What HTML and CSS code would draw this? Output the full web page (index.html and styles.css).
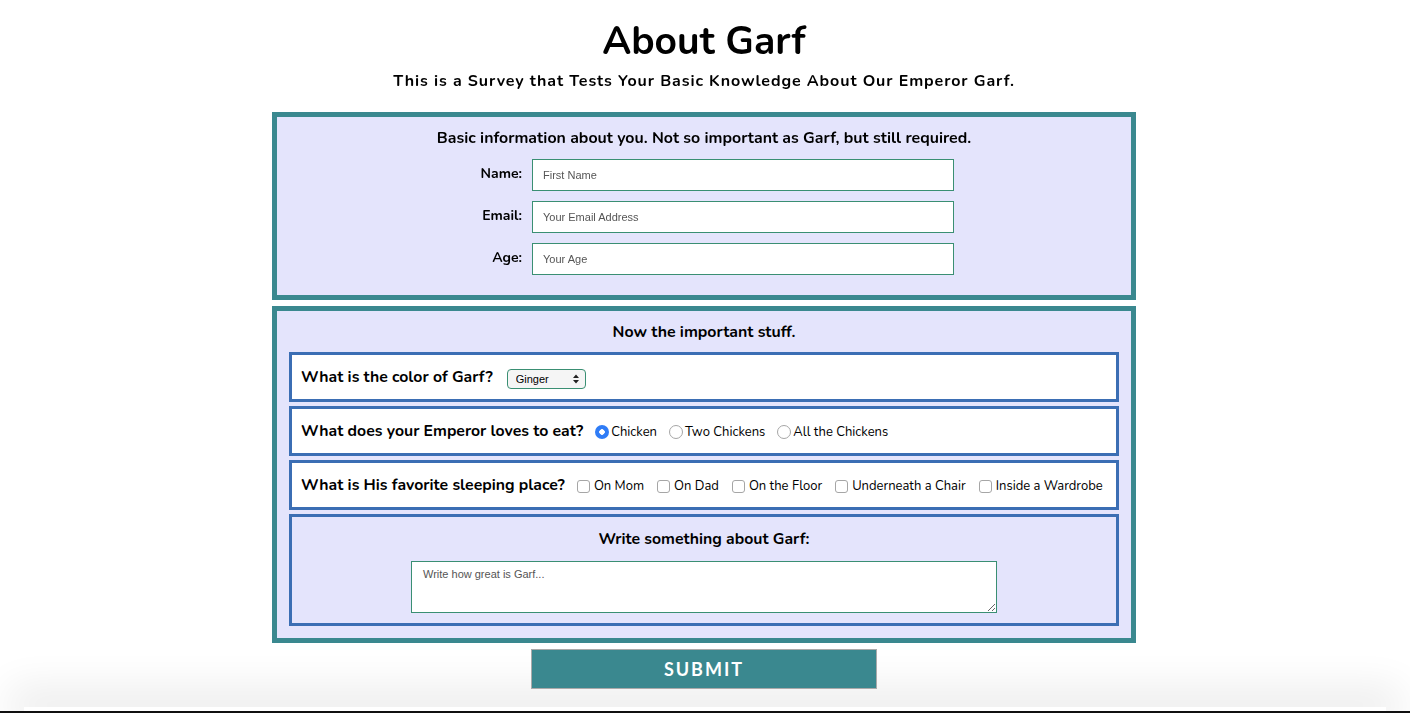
FILE: index.html
```html
<!DOCTYPE html>
<html lang="en">
<head>
<meta charset="utf-8">
<title>About Garf</title>
<link rel="stylesheet" href="styles.css">
</head>
<body>
<header class="header">
  <h1 class="title">About Garf</h1>
  <p class="subtitle">This is a Survey that Tests Your Basic Knowledge About Our Emperor Garf.</p>
</header>
<form class="survey">
  <section class="panel panel-basic">
    <h2 class="panel-title">Basic information about you. Not so important as Garf, but still required.</h2>
    <div class="field-row">
      <label class="field-label" for="name">Name:</label>
      <input class="text-input" id="name" type="text" placeholder="First Name">
    </div>
    <div class="field-row">
      <label class="field-label" for="email">Email:</label>
      <input class="text-input" id="email" type="email" placeholder="Your Email Address">
    </div>
    <div class="field-row">
      <label class="field-label" for="age">Age:</label>
      <input class="text-input" id="age" type="number" placeholder="Your Age">
    </div>
  </section>

  <section class="panel panel-important">
    <h2 class="panel-title">Now the important stuff.</h2>
    <div class="question">
      <span class="question-text">What is the color of Garf?</span>
      <span class="select-wrap">
        <select class="select">
          <option>Ginger</option>
          <option>Orange</option>
          <option>Golden</option>
        </select>
        <svg class="select-arrows" width="6" height="10" viewBox="0 0 6 10"><path d="M0 4 L3 0.5 L6 4 Z M0 6 L3 9.5 L6 6 Z" fill="#222"/></svg>
      </span>
    </div>
    <div class="question">
      <span class="question-text">What does your Emperor loves to eat?</span>
      <label class="choice radio-choice"><input class="radio" type="radio" name="food" checked>Chicken</label>
      <label class="choice radio-choice"><input class="radio" type="radio" name="food">Two Chickens</label>
      <label class="choice radio-choice"><input class="radio" type="radio" name="food">All the Chickens</label>
    </div>
    <div class="question">
      <span class="question-text">What is His favorite sleeping place?</span>
      <label class="choice check-choice"><input class="check" type="checkbox">On Mom</label>
      <label class="choice check-choice"><input class="check" type="checkbox">On Dad</label>
      <label class="choice check-choice"><input class="check" type="checkbox">On the Floor</label>
      <label class="choice check-choice"><input class="check" type="checkbox">Underneath a Chair</label>
      <label class="choice check-choice"><input class="check" type="checkbox">Inside a Wardrobe</label>
    </div>
    <div class="question question-write">
      <span class="question-text">Write something about Garf:</span>
      <textarea class="textarea" placeholder="Write how great is Garf..."></textarea>
    </div>
  </section>

  <div class="submit-row">
    <button class="submit" type="submit">SUBMIT</button>
  </div>
</form>
<div class="window-edge"></div>
</body>
</html>
```

FILE: styles.css
```css
html {
  background: #ffffff;
}
body {
  margin: 0;
  padding-right: 2px;
  font-family: "Nunito", "Lato", "Open Sans", sans-serif;
  color: #000;
}
.header {
  text-align: center;
  padding-top: 20px;
}
.title {
  margin: 0;
  font-size: 39px;
  line-height: 44px;
  font-weight: 700;
}
.subtitle {
  margin: 7px 0 0;
  font-size: 16px;
  line-height: 20px;
  font-weight: 700;
  letter-spacing: 0.9px;
}
.survey {
  width: 864px;
  margin: 21px auto 0;
  display: flex;
  flex-direction: column;
  gap: 6px;
}
.panel {
  border: 5px solid #3a888f;
  background: #e4e4fc;
  display: flex;
  flex-direction: column;
}
.panel-basic {
  padding: 11px 0 20px;
  gap: 10px;
  align-items: center;
}
.panel-title {
  margin: 0;
  font-size: 15.9px;
  line-height: 20px;
  font-weight: 700;
  text-align: center;
}
.panel-basic .panel-title {
  margin-bottom: 1px;
}
.field-row {
  display: flex;
  align-items: center;
  width: 500px;
  gap: 10px;
}
.field-label {
  width: 68px;
  text-align: right;
  font-size: 14px;
  font-weight: 700;
  position: relative;
  top: -2px;
}
.text-input {
  box-sizing: border-box;
  width: 422px;
  height: 32px;
  border: 1px solid #3a8f73;
  background: #fff;
  padding: 0 10px;
  font-family: "Liberation Sans", Arial, sans-serif;
  font-size: 11px;
  outline: none;
  margin: 0;
}
.text-input::placeholder,
.textarea::placeholder {
  color: #555;
}
.text-input::-webkit-outer-spin-button,
.text-input::-webkit-inner-spin-button {
  -webkit-appearance: none;
}
.panel-important {
  padding: 11px 12px 12px;
  gap: 4px;
}
.panel-important .panel-title {
  margin-bottom: 6px;
}
.question {
  border: 3px solid #3b6eb4;
  background: #fff;
  height: 50px;
  box-sizing: border-box;
  display: flex;
  align-items: center;
  padding: 0 9px;
  white-space: nowrap;
}
.question-text {
  font-size: 15.8px;
  font-weight: 700;
  margin-right: 12px;
  flex-shrink: 0;
}
.select-wrap {
  position: relative;
  display: inline-flex;
  margin-left: 2px;
  top: 2px;
}
.select {
  -webkit-appearance: none;
  appearance: none;
  box-sizing: border-box;
  width: 79px;
  height: 20px;
  border: 1px solid #3a8f73;
  border-radius: 4px;
  background: #f5f5f5;
  font-family: "Liberation Sans", Arial, sans-serif;
  font-size: 11px;
  padding: 0 0 0 8px;
  color: #000;
  outline: none;
}
.select-arrows {
  position: absolute;
  right: 7px;
  top: 5px;
  pointer-events: none;
}
.choice {
  display: inline-flex;
  align-items: center;
  font-size: 13px;
  flex-shrink: 0;
  position: relative;
  top: 1px;
}
.radio-choice {
  margin-right: 12px;
}
.check-choice {
  margin-right: 13px;
}
.radio {
  -webkit-appearance: none;
  appearance: none;
  width: 14px;
  height: 14px;
  margin: 0 2px 0 0;
  border-radius: 50%;
  border: 1px solid #a6a6a6;
  background: #fff;
  box-sizing: border-box;
}
.radio:checked {
  border: none;
  background: radial-gradient(circle, #fff 0 2.5px, #2f7cf6 3px);
}
.check {
  -webkit-appearance: none;
  appearance: none;
  width: 13px;
  height: 13px;
  margin: 0 4px 0 0;
  border-radius: 3px;
  border: 1px solid #a6a6a6;
  background: #fff;
  box-sizing: border-box;
}
.question-write {
  height: 112px;
  background: #e4e4fc;
  flex-direction: column;
  align-items: center;
  justify-content: flex-start;
  padding-top: 11px;
}
.question-write .question-text {
  margin: 0;
  line-height: 22px;
}
.textarea {
  box-sizing: border-box;
  width: 586px;
  height: 52px;
  margin-top: 11px;
  border: 1px solid #3a8f73;
  background: #fff;
  padding: 6px 11px;
  font-family: "Liberation Sans", Arial, sans-serif;
  font-size: 11px;
  outline: none;
  display: block;
}
.submit-row {
  display: flex;
  justify-content: center;
}
.submit {
  width: 346px;
  height: 40px;
  background: #3a888f;
  border: 1px solid #aaaaaa;
  color: #fff;
  font-family: "Lato", "Open Sans", sans-serif;
  font-size: 18px;
  font-weight: 700;
  letter-spacing: 2px;
  cursor: pointer;
}
.window-edge {
  position: fixed;
  left: 0;
  right: 0;
  bottom: 0;
  height: 2px;
  background: #111;
  z-index: -1;
}
.window-edge::before {
  content: "";
  position: absolute;
  left: 24px;
  right: 24px;
  bottom: 2px;
  height: 4px;
  box-shadow: 0 -4px 40px 14px rgba(0, 0, 0, 0.09);
}
```
